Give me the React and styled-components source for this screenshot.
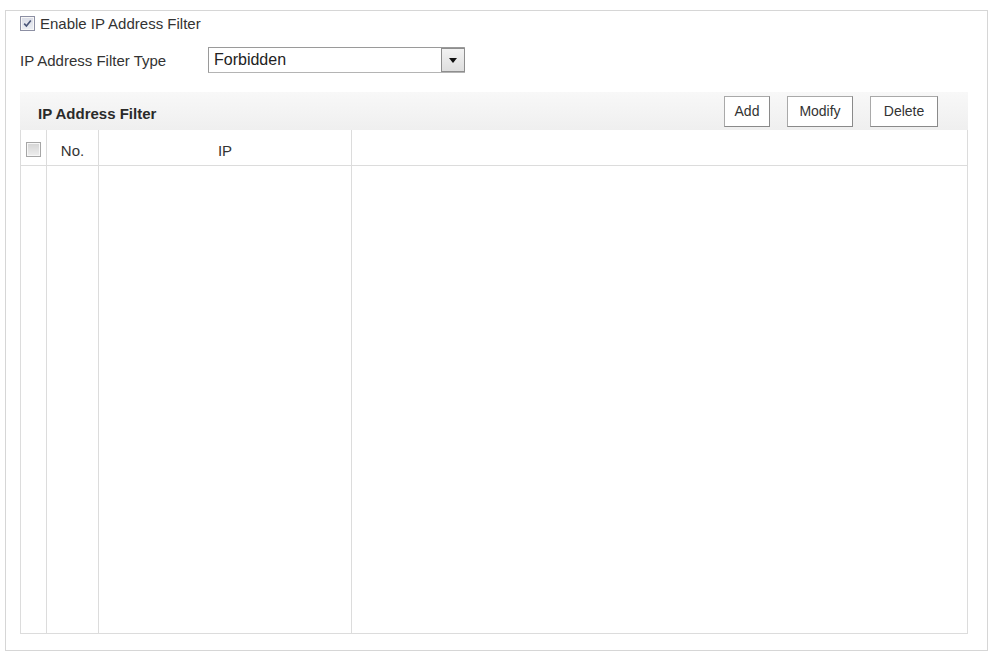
import styled, { createGlobalStyle } from "styled-components";

const GlobalStyle = createGlobalStyle`
  html, body {
    margin: 0;
    padding: 0;
    background: #ffffff;
  }
  body {
    font-family: "Liberation Sans", Arial, sans-serif;
    color: #333333;
  }
`;

const Page = styled.div`
  padding: 10px 4px 5px 5px;
  box-sizing: border-box;
  height: 656px;
`;

const Panel = styled.section`
  height: 641px;
  box-sizing: border-box;
  border: 1px solid #d6d6d6;
  padding: 0 19px 16px 14px;
  display: flex;
  flex-direction: column;
`;

const EnableRow = styled.label`
  height: 25px;
  display: flex;
  align-items: center;
  gap: 5px;
  font-size: 15px;
  color: #333;
`;

const Box = styled.span`
  width: 13px;
  height: 13px;
  border: 1px solid ${(p) => (p.checked ? "#8c8fa3" : "#a6a6a6")};
  background: ${(p) =>
    p.checked
      ? "linear-gradient(#d9dce6, #eceef4)"
      : "linear-gradient(#d4d4d4, #eeeeee)"};
  display: inline-flex;
  align-items: center;
  justify-content: center;
  flex-shrink: 0;
  box-shadow: inset 0 0 0 1px #f7f7f7;
`;

const TypeRow = styled.div`
  margin-top: 11px;
  height: 26px;
  display: flex;
  align-items: center;
  font-size: 15px;
`;

const TypeLabel = styled.span`
  width: 188px;
  flex-shrink: 0;
`;

const Select = styled.div`
  width: 257px;
  height: 26px;
  box-sizing: border-box;
  border: 1px solid #b4b4b4;
  border-top-color: #9a9a9a;
  border-left-color: #9a9a9a;
  display: flex;
  align-items: center;
  font-size: 16px;
  color: #222;
  padding-left: 5px;
  background: #fff;
`;

const SelectValue = styled.span`
  flex: 1;
`;

const ArrowButton = styled.span`
  width: 24px;
  height: 24px;
  box-sizing: border-box;
  margin-right: -1px;
  border: 1px solid #8e8e8e;
  background: linear-gradient(#f2f2f2, #dedede);
  display: flex;
  align-items: center;
  justify-content: center;
`;

const TableWrap = styled.div`
  margin-top: 19px;
  flex: 1;
  display: flex;
  flex-direction: column;
`;

const HeaderBar = styled.div`
  height: 38px;
  background: linear-gradient(#f8f8f8, #efefef);
  display: flex;
  align-items: center;
  padding: 0 30px 0 18px;
`;

const Title = styled.span`
  font-weight: bold;
  font-size: 15px;
  color: #2a2a2a;
  flex: 1;
  padding-top: 4px;
`;

const Buttons = styled.div`
  display: flex;
  gap: 17px;
`;

const Button = styled.button`
  width: ${(p) => p.w}px;
  height: 31px;
  padding: 0;
  font-family: "Liberation Sans", Arial, sans-serif;
  font-size: 14px;
  color: #333;
  background: #ffffff;
  border: 1px solid #a9a9a9;
  border-right-color: #8a8a8a;
  border-bottom-color: #8a8a8a;
  cursor: pointer;
`;

const Grid = styled.div`
  flex: 1;
  display: grid;
  grid-template-columns: 26px 52px 253px 1fr;
  grid-template-rows: 36px 1fr;
  border: 1px solid #dcdcdc;
  border-top: none;
`;

const HeadCell = styled.div`
  border-bottom: 1px solid #dcdcdc;
  border-right: ${(p) => (p.last ? "none" : "1px solid #dcdcdc")};
  display: flex;
  align-items: center;
  justify-content: center;
  padding-top: ${(p) => (p.text ? 5 : 3)}px;
  box-sizing: border-box;
  font-size: 15px;
  color: #333;
`;

const BodyCell = styled.div`
  border-right: ${(p) => (p.last ? "none" : "1px solid #dcdcdc")};
`;

const Checkbox = ({ checked }) => (
  <Box checked={checked}>
    {checked && (
      <svg width="9" height="9" viewBox="0 0 9 9">
        <path
          d="M1.2 4.6 L3.4 7 L7.8 1.4"
          fill="none"
          stroke="#4a5578"
          strokeWidth="1.6"
        />
      </svg>
    )}
  </Box>
);

const App = () => {
  return (
    <Page>
      <GlobalStyle />
      <Panel>
        <EnableRow>
          <Checkbox checked />
          Enable IP Address Filter
        </EnableRow>
        <TypeRow>
          <TypeLabel>IP Address Filter Type</TypeLabel>
          <Select>
            <SelectValue>Forbidden</SelectValue>
            <ArrowButton>
              <svg width="8" height="5" viewBox="0 0 8 5">
                <path d="M0 0 H8 L4 5 Z" fill="#111" />
              </svg>
            </ArrowButton>
          </Select>
        </TypeRow>
        <TableWrap>
          <HeaderBar>
            <Title>IP Address Filter</Title>
            <Buttons>
              <Button w={46}>Add</Button>
              <Button w={66}>Modify</Button>
              <Button w={68}>Delete</Button>
            </Buttons>
          </HeaderBar>
          <Grid>
            <HeadCell>
              <Checkbox />
            </HeadCell>
            <HeadCell text>No.</HeadCell>
            <HeadCell text>IP</HeadCell>
            <HeadCell last />
            <BodyCell />
            <BodyCell />
            <BodyCell />
            <BodyCell last />
          </Grid>
        </TableWrap>
      </Panel>
    </Page>
  );
};

export default App;
